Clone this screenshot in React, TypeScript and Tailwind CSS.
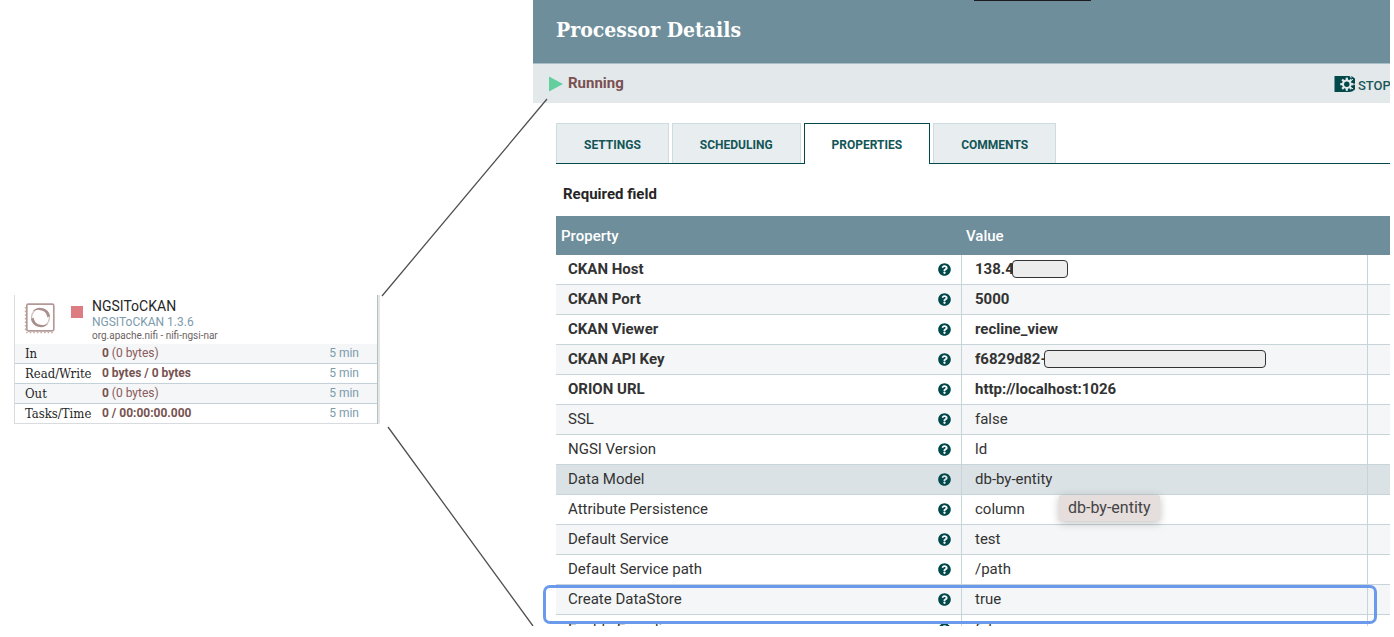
import React from 'react';
import { FaQuestionCircle } from 'react-icons/fa';

type Property = {
  name: string;
  value: string;
  required?: boolean;
  hiddenWidth?: string;
};

const properties: Property[] = [
  { name: 'CKAN Host', value: '138.4', required: true, hiddenWidth: 'w-14' },
  { name: 'CKAN Port', value: '5000', required: true },
  { name: 'CKAN Viewer', value: 'recline_view', required: true },
  { name: 'CKAN API Key', value: 'f6829d82-', required: true, hiddenWidth: 'w-[222px]' },
  { name: 'ORION URL', value: 'http://localhost:1026', required: true },
  { name: 'SSL', value: 'false' },
  { name: 'NGSI Version', value: 'ld' },
  { name: 'Data Model', value: 'db-by-entity' },
  { name: 'Attribute Persistence', value: 'column' },
  { name: 'Default Service', value: 'test' },
  { name: 'Default Service path', value: '/path' },
  { name: 'Create DataStore', value: 'true' },
  { name: 'Enable Encoding', value: 'false' },
];

const stats = [
  { label: 'In', strong: '0', rest: ' (0 bytes)' },
  { label: 'Read/Write', strong: '0 bytes / 0 bytes', rest: '' },
  { label: 'Out', strong: '0', rest: ' (0 bytes)' },
  { label: 'Tasks/Time', strong: '0 / 00:00:00.000', rest: '' },
];

const tabs = ['SETTINGS', 'SCHEDULING', 'PROPERTIES', 'COMMENTS'];

const gearAngles = [0, 45, 90, 135, 180, 225, 270, 315];

function ProcessorIcon() {
  return (
    <svg viewBox="0 0 32 32" className="size-8 shrink-0" fill="none" aria-hidden="true">
      <rect x="2.8" y="1.2" width="27" height="26.6" rx="1.5" stroke="#b39a99" strokeWidth="1.7" />
      <path d="M1.400 4v24" stroke="#c9aca0" strokeWidth="1.2" strokeDasharray="1.6 2" />
      <path d="M2 29.6h27" stroke="#c9aca0" strokeWidth="1.4" strokeDasharray="1.6 2" />
      <circle cx="16.500" cy="14.500" r="9" stroke="#cdbab6" strokeWidth="1.200" />
      <path d="M8.500 8.500A10 10 0 0 1 26 13L23.500 14.500 22.500 11.500A7.500 7.500 0 0 0 16.500 7.200 10 10 0 0 0 8.500 8.500Z" fill="#a98f8e" />
      <path d="M24.500 20.500A10 10 0 0 1 7 16L9.500 14.500 10.500 17.500A7.500 7.500 0 0 0 16.500 21.800 10 10 0 0 0 24.500 20.500Z" fill="#a98f8e" />
    </svg>
  );
}

function StopConfigureIcon() {
  return (
    <svg viewBox="0 0 21 18" className="h-[18px] w-[21px] shrink-0" aria-hidden="true">
      <path d="M0.500 1h14.500a8 8 0 0 1 0 16H0.500Z" fill="#004849" />
      <g fill="#e3e8eb">
        <circle cx="12.800" cy="9.200" r="4.800" />
        {gearAngles.map((a) => (
          <rect key={a} x="11.700" y="2.600" width="2.200" height="3" transform={`rotate(${a} 12.800 9.200)`} />
        ))}
      </g>
      <circle cx="12.800" cy="9.200" r="2.700" fill="#004849" />
      <path d="M16 1l1.500 2.200M19 4.200l-1.600 1.200M21 9.200h-1.600M19.200 14l-1.600-1.200" stroke="#e3e8eb" strokeWidth="1" />
    </svg>
  );
}

function ProcessorCard() {
  return (
    <article className="mt-[295px] ml-3.5 flex w-[366px] border-l border-[#d8dcde] bg-white">
      <div className="min-w-0 flex-1">
        <header className="flex h-[49px] items-start pl-[9px]">
          <div className="pt-2">
            <ProcessorIcon />
          </div>
          <span className="mt-[11px] ml-[15px] size-3 shrink-0 bg-[#dc7d81]" />
          <div className="ml-[9px] whitespace-nowrap">
            <h2 className="text-[14px] leading-[22px] text-[#262626]">NGSIToCKAN</h2>
            <p className="text-[12px] leading-[10px] text-[#7c9bab]">NGSIToCKAN 1.3.6</p>
            <p className="text-[10px] leading-[17px] text-[#6d6262]">org.apache.nifi - nifi-ngsi-nar</p>
          </div>
        </header>
        <table className="w-full table-fixed border-separate border-spacing-0 text-[12px] leading-[19px]">
          <colgroup>
            <col className="w-[87px]" />
            <col />
            <col className="w-16" />
          </colgroup>
          <tbody>
            {stats.map((s) => (
              <tr key={s.label} className="h-5 odd:bg-[#f4f6f7] [&>*]:border-b [&>*]:border-[#c3d2d8] [&>*]:py-0 last:[&>*]:border-[#d8dcde]">
                <th scope="row" className="pl-2.5 text-left font-['Roboto_Slab','DejaVu_Serif_Condensed','DejaVu_Serif',serif] text-[13px] font-normal whitespace-nowrap text-[#262626]">
                  {s.label}
                </th>
                <td className="text-[#8a5a5a]">
                  <b className="font-bold text-[#775351]">{s.strong}</b>
                  {s.rest}
                </td>
                <td className="pr-[18px] text-right text-[#7c9bab]">5 min</td>
              </tr>
            ))}
          </tbody>
        </table>
      </div>
      <div className="w-[3px] border-l border-[#b9bec0] bg-[#e4e7e8]" />
    </article>
  );
}

function PropertyTable() {
  return (
    <div className="relative mt-3 ml-[23px]">
      <div className="h-[410px] overflow-hidden">
        <table className="w-full table-fixed border-separate border-spacing-0 text-left text-[15px] leading-5">
          <colgroup>
            <col />
            <col />
            <col className="w-[22px]" />
          </colgroup>
          <thead>
            <tr className="h-[39px] bg-[#6d8e9a] text-white">
              <th className="py-0 pl-[5px] font-medium">Property</th>
              <th className="py-0 pl-1 font-medium">Value</th>
              <th />
            </tr>
          </thead>
          <tbody className="text-[#333]">
            {properties.map((p) => {
              const selected = p.name === 'Data Model';
              const weight = p.required ? 'font-bold' : 'font-normal';
              return (
                <tr
                  key={p.name}
                  className={`h-[30px] [&>td]:border-b [&>td]:border-[#c7d5db] [&>td]:pt-0 [&>td]:pb-px ${selected ? 'bg-[#dbe2e5]' : 'even:bg-[#f4f6f7]'}`}
                >
                  <td className="border-r pr-2.5 pl-3">
                    <div className="flex items-center justify-between">
                      <span className={weight}>{p.name}</span>
                      <FaQuestionCircle className="size-[13px] text-[#004849]" />
                    </div>
                  </td>
                  <td className="border-r pl-[13px]">
                    <div className="flex items-center">
                      <span className={weight}>{p.value}</span>
                      {p.hiddenWidth && (
                        <span className={`-ml-0.5 h-[18px] rounded-[4px] border border-[#333] bg-[#ededed] ${p.hiddenWidth}`} />
                      )}
                    </div>
                  </td>
                  <td />
                </tr>
              );
            })}
          </tbody>
        </table>
      </div>
      <div className="absolute top-[279px] left-[503px] rounded-[3px] bg-[#e6dddd] px-[9px] text-[16px] leading-[26px] text-[#444] shadow-[0_2px_8px_rgba(0,0,0,0.25)]">
        db-by-entity
      </div>
      <div className="absolute top-[369px] right-[13px] -left-[13px] h-[39px] rounded-[7px] border-[3px] border-[#6b9aec]" />
    </div>
  );
}

export default function App() {
  return (
    <main className="relative flex items-start overflow-hidden bg-white pr-1 pb-[11px] font-[Roboto,sans-serif]">
      <aside className="w-[533px] shrink-0">
        <ProcessorCard />
      </aside>

      <section className="relative min-w-0 flex-1">
        <div className="absolute top-0 left-[441px] h-px w-[117px] bg-[#1c1c1c]" />
        <header className="flex h-16 items-center border-b border-[#a9bdc5] bg-[#6d8e9a] pb-1 pl-[23px]">
          <h1 className="font-['Roboto_Slab','DejaVu_Serif_Condensed','DejaVu_Serif',serif] text-[21px] font-bold text-white">
            Processor Details
          </h1>
        </header>
        <div className="flex h-[39px] items-center justify-between bg-[#e3e8eb] pl-4">
          <div className="flex items-center gap-[5px] text-[15px] font-bold text-[#7b5051]">
            <svg viewBox="0 0 14 16" className="h-4 w-3.5" aria-hidden="true">
              <path d="M0 0.500 14 8 0 15.500Z" fill="#63cf9f" />
            </svg>
            Running
          </div>
          <button type="button" className="flex w-14 items-start gap-[3px] overflow-hidden pt-1 text-[13px] leading-[22px] font-medium whitespace-nowrap text-[#1a5657]">
            <StopConfigureIcon />
            STOP
          </button>
        </div>

        <div role="tablist" className="mt-5 ml-[23px] flex gap-[3px] border-b border-[#004849] text-[12px] font-bold text-[#135556]">
          {tabs.map((t) => (
            <button
              key={t}
              type="button"
              role="tab"
              aria-selected={t === 'PROPERTIES'}
              className={
                t === 'PROPERTIES'
                  ? '-mb-px h-[41px] border border-b-0 border-[#004849] bg-white px-[27px] pt-0.5'
                  : 'h-10 border border-b-0 border-[#cddcde] bg-[#e8edf0] px-[27px] pt-[3px]'
              }
            >
              {t}
            </button>
          ))}
        </div>

        <p className="mt-5 ml-[30px] text-[15px] leading-5 font-bold text-[#262626]">Required field</p>
        <PropertyTable />
      </section>

      <svg className="pointer-events-none absolute top-0 left-0 h-[626px] w-[560px]" viewBox="0 0 560 626" aria-hidden="true">
        <path d="M547 99 382 296M388 427 533 626" stroke="#505050" strokeWidth="1.300" fill="none" />
      </svg>
    </main>
  );
}
